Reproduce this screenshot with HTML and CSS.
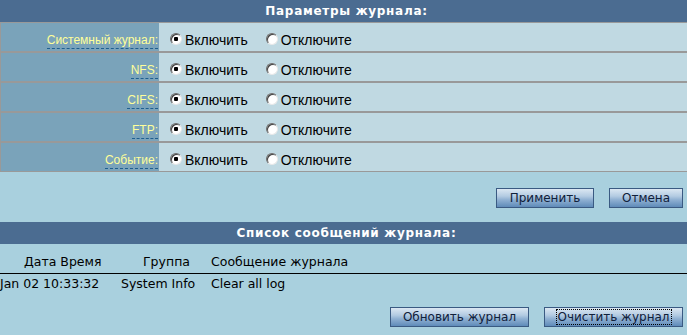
FILE: index.html
```html
<!DOCTYPE html>
<html lang="ru">
<head>
    <meta charset="UTF-8">
    <meta name="viewport" content="width=device-width, initial-scale=1.0">
    <title>Журнал</title>
    <link rel="stylesheet" href="styles.css">
</head>
<body>
    <div class="page">
        <div class="section-head">Параметры журнала:</div>
        <table class="settings">
            <tr>
                <td class="label"><span>Системный журнал:</span></td>
                <td class="value">
                    <label class="opt"><input type="radio" name="syslog" checked>Включить</label>
                    <label class="opt"><input type="radio" name="syslog">Отключите</label>
                </td>
            </tr>
            <tr>
                <td class="label"><span>NFS:</span></td>
                <td class="value">
                    <label class="opt"><input type="radio" name="nfs" checked>Включить</label>
                    <label class="opt"><input type="radio" name="nfs">Отключите</label>
                </td>
            </tr>
            <tr>
                <td class="label"><span>CIFS:</span></td>
                <td class="value">
                    <label class="opt"><input type="radio" name="cifs" checked>Включить</label>
                    <label class="opt"><input type="radio" name="cifs">Отключите</label>
                </td>
            </tr>
            <tr>
                <td class="label"><span>FTP:</span></td>
                <td class="value">
                    <label class="opt"><input type="radio" name="ftp" checked>Включить</label>
                    <label class="opt"><input type="radio" name="ftp">Отключите</label>
                </td>
            </tr>
            <tr>
                <td class="label"><span>Событие:</span></td>
                <td class="value">
                    <label class="opt"><input type="radio" name="event" checked>Включить</label>
                    <label class="opt"><input type="radio" name="event">Отключите</label>
                </td>
            </tr>
        </table>

        <div class="actions">
            <button class="btn btn-apply">Применить</button>
            <button class="btn btn-cancel">Отмена</button>
        </div>

        <div class="section-head">Список сообщений журнала:</div>
        <table class="log">
            <colgroup>
                <col class="col-date">
                <col class="col-group">
                <col>
            </colgroup>
            <thead>
                <tr>
                    <th class="h-date">Дата Время</th>
                    <th class="h-group">Группа</th>
                    <th class="h-msg">Сообщение журнала</th>
                </tr>
            </thead>
            <tbody>
                <tr>
                    <td>Jan 02 10:33:32</td>
                    <td class="d-pad">System Info</td>
                    <td class="d-pad">Clear all log</td>
                </tr>
            </tbody>
        </table>

        <div class="actions actions-log">
            <button class="btn btn-wide">Обновить журнал</button>
            <button class="btn btn-wide"><span class="focus">Очистить журнал</span></button>
        </div>
    </div>
</body>
</html>
```

FILE: styles.css
```css
html, body {
    margin: 0;
    padding: 0;
    overflow: hidden;
}

body {
    background-color: #a9d0de;
    font-family: 'DejaVu Sans', sans-serif;
    font-size: 12px;
    color: #000;
}

.page {
    width: 693px;
}

.section-head {
    height: 22px;
    line-height: 23px;
    background-color: #4b6c91;
    color: #fff;
    font-weight: bold;
    font-size: 12px;
    letter-spacing: 0.7px;
    text-align: center;
}

/* settings table */
.settings {
    width: 100%;
    border-collapse: separate;
    border-spacing: 0;
    border-left: 1px solid #999;
}

.settings td {
    height: 23px;
    padding: 5px 0 0 0;
    border-top: 1px solid #999;
    border-bottom: 1px solid #999;
}

.settings .label {
    width: 157px;
    padding-right: 1px;
    background-color: #7aa3ba;
    text-align: right;
    font-family: 'Liberation Sans', Arial, sans-serif;
    font-size: 12px;
    color: #ffff99;
}

.settings .label span {
    border-bottom: 1px dashed #1f5f90;
    padding-bottom: 1px;
}

.settings .value {
    background-color: #c0d9e2;
    padding-left: 11px;
    font-family: 'Liberation Sans', Arial, sans-serif;
    font-size: 14px;
}

.opt {
    display: inline-flex;
    align-items: center;
    margin-right: 14px;
}

.opt input {
    -webkit-appearance: none;
    appearance: none;
    width: 12px;
    height: 12px;
    margin: 0 3px 2px 0;
    border-radius: 50%;
    border: 1px solid;
    border-color: #6a6a6a #e8e8e8 #e8e8e8 #6a6a6a;
    background-color: #fff;
    box-shadow: inset 1px 1px 0 #404040;
}

.opt input:checked {
    background: radial-gradient(circle, #000 0, #000 2px, #fff 2.5px);
}

/* buttons */
.actions {
    display: flex;
    justify-content: flex-end;
    gap: 15px;
    padding: 16px 10px 14px 0;
}

.actions-log {
    padding-top: 15px;
}

.btn {
    height: 20px;
    padding: 0;
    border: 1px solid #3a5a82;
    background: linear-gradient(#dbe7f2 0, #b3cbe2 40%, #8fb0d2 60%, #5f8bb9 100%);
    font-family: 'DejaVu Sans', sans-serif;
    font-size: 12px;
    color: #10203a;
    cursor: pointer;
}

.btn-apply {
    width: 98px;
}

.btn-cancel {
    width: 74px;
}

.btn-wide {
    width: 139px;
}

.focus {
    border: 1px dotted #000;
    padding: 0 1px;
}

/* log table */
.log {
    width: 100%;
    border-collapse: collapse;
    table-layout: fixed;
    font-size: 12.5px;
}

.log .col-date {
    width: 118px;
}

.log .col-group {
    width: 90px;
}

.log th {
    font-weight: normal;
    text-align: left;
    white-space: nowrap;
    padding: 10px 0 3px 0;
    line-height: 16px;
    border-bottom: 1px solid #000;
}

.log td {
    padding: 2px 0 0 0;
    line-height: 16px;
    white-space: nowrap;
}

.log .h-date {
    padding-left: 24px;
}

.log .h-group {
    padding-left: 25px;
}

.log .h-msg,
.log .d-pad {
    padding-left: 3px;
}
```
